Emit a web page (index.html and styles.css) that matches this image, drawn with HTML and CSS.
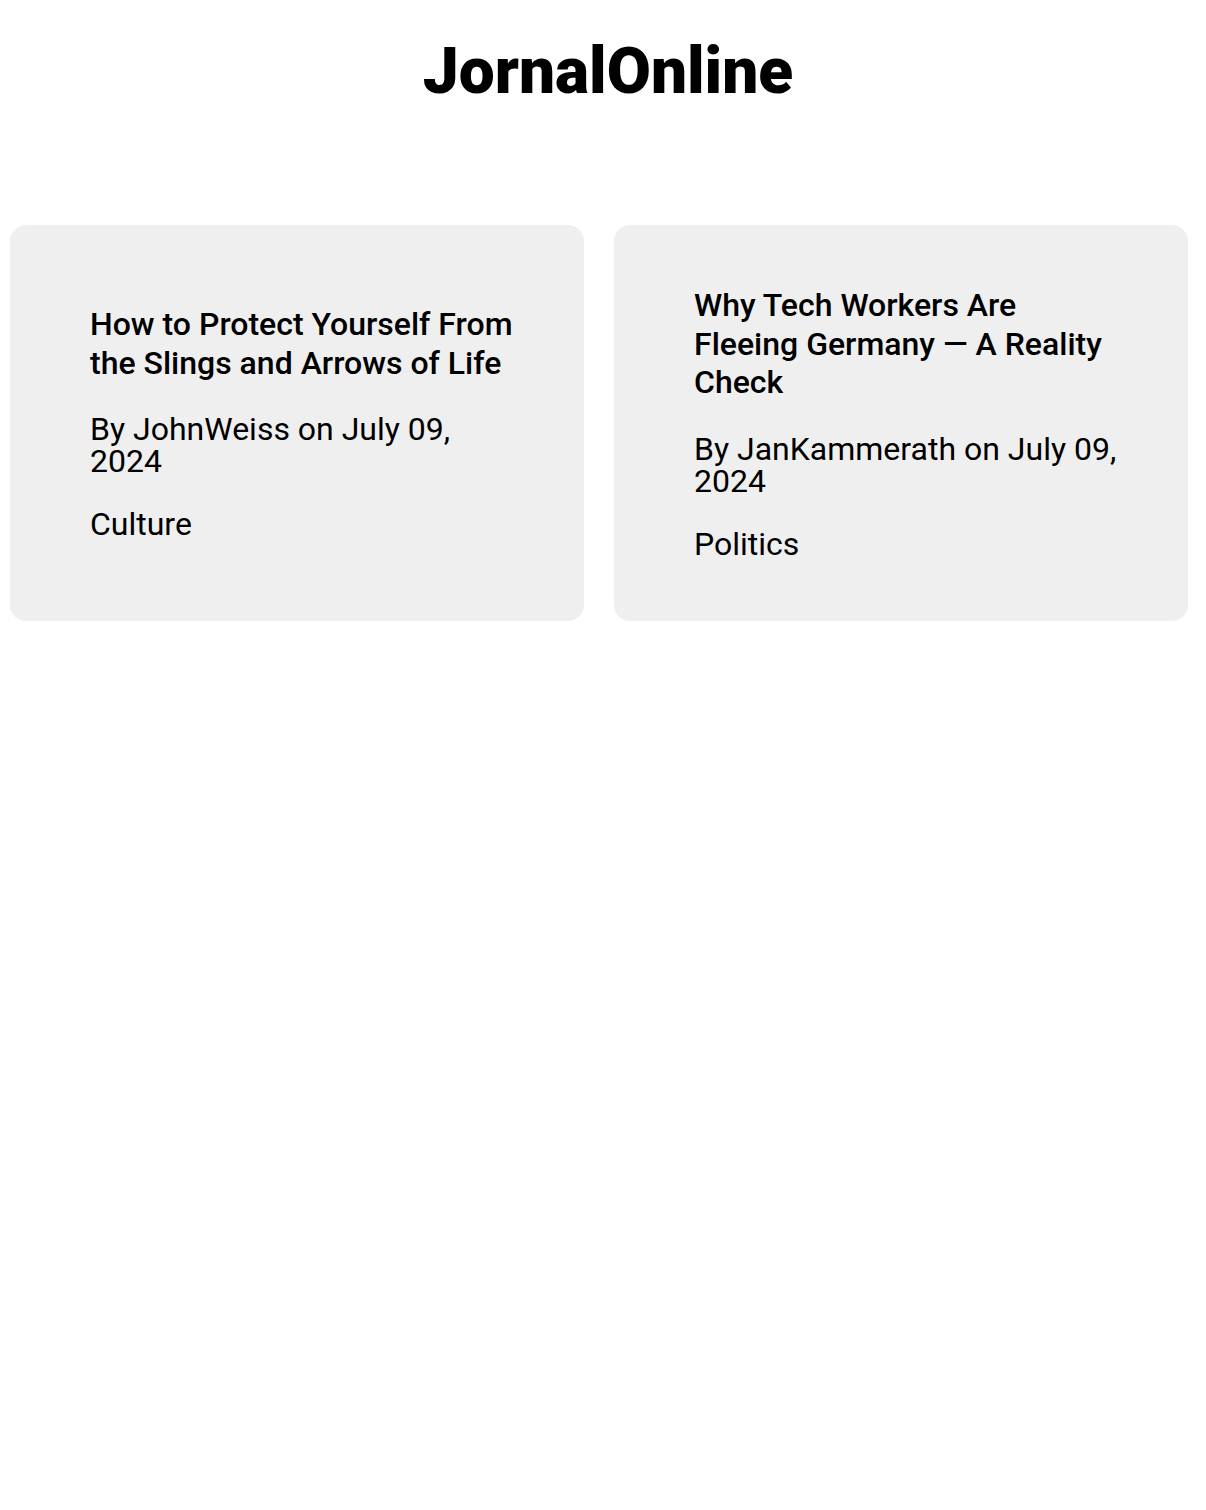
FILE: index.html
```html
<!DOCTYPE html>
<html lang="en">
<head>
<meta charset="utf-8">
<title>JornalOnline</title>
<link rel="stylesheet" href="styles.css">
</head>
<body>
<header class="site-header">
  <h1 class="logo">JornalOnline</h1>
</header>
<main class="articles">
  <article class="card">
    <h2 class="card-title">How to Protect Yourself From the Slings and Arrows of Life</h2>
    <p class="card-meta">By JohnWeiss on July 09, 2024</p>
    <p class="card-category">Culture</p>
  </article>
  <article class="card">
    <h2 class="card-title">Why Tech Workers Are Fleeing Germany — A Reality Check</h2>
    <p class="card-meta">By JanKammerath on July 09, 2024</p>
    <p class="card-category">Politics</p>
  </article>
</main>
</body>
</html>
```
FILE: styles.css
```css
html, body {
  margin: 0;
  padding: 0;
  background: #ffffff;
  color: #000000;
  font-family: Roboto, "Liberation Sans", sans-serif;
}

.site-header {
  display: flex;
  justify-content: center;
  padding: 34px 0 0 10px;
  height: 225px;
  box-sizing: border-box;
}

.logo {
  margin: 0;
  font-size: 64px;
  font-weight: 900;
  line-height: 1.2;
}

.articles {
  display: grid;
  grid-template-columns: 1fr 1fr;
  gap: 30px;
  padding: 0 18px 0 10px;
}

.card {
  background: #efefef;
  border-radius: 16px;
  padding: 61px 64px 61px 80px;
  display: flex;
  flex-direction: column;
  justify-content: center;
  gap: 31px;
}

.card-title {
  margin: 0;
  font-size: 32px;
  font-weight: 500;
  line-height: 38.5px;
}

.card-meta,
.card-category {
  margin: 0;
  font-size: 32px;
  font-weight: 400;
  line-height: 32px;
}
```
